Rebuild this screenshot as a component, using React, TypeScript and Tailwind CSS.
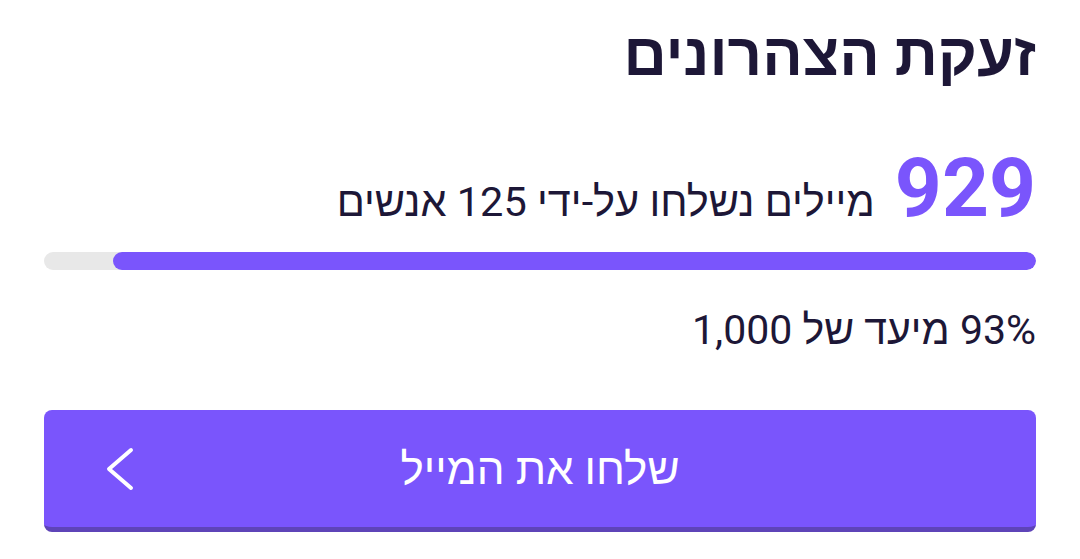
const sent = 929;
const goal = 1000;

export default function App() {
  const pct = Math.round((sent / goal) * 100);
  return (
    <div
      dir="rtl"
      className="min-h-[559px] w-[1080px] bg-white px-[44px] pt-[17px] text-[#1d1737]"
      style={{ fontFamily: 'Roboto, "Noto Sans", sans-serif' }}
    >
      <h1 className="text-[60px] font-bold leading-[76px]">זעקת הצהרונים</h1>

      <div className="mt-[55px] flex items-baseline gap-[20px]">
        <span className="text-[82px] font-bold leading-[80px] text-[#7a55fc]">
          {sent}
        </span>
        <span className="text-[41.5px] leading-[44px]">
          מיילים נשלחו על-ידי 125 אנשים
        </span>
      </div>

      <div className="mt-[24px] h-[18px] w-full overflow-hidden rounded-full bg-[#e8e8e8]">
        <div
          className="h-full rounded-full bg-[#7a55fc]"
          style={{ width: `${pct}%` }}
        />
      </div>

      <p className="mt-[36px] text-[41px] leading-[48px]">
        {pct}% מיעד של 1,000
      </p>

      <button className="mt-[56px] grid h-[122px] w-full grid-cols-[1fr_auto_1fr] items-center rounded-[8px] border-b-[5px] border-[#5e44b8] bg-[#7a55fc] px-[62px] text-white">
        <span />
        <span className="text-[44px] leading-[48px]">שלחו את המייל</span>
        <span className="flex justify-end">
          <svg width="28" height="44" viewBox="0 0 28 44" fill="none">
            <polyline
              points="25,3 3,22 25,41"
              stroke="currentColor"
              strokeWidth="4"
              strokeLinecap="round"
              strokeLinejoin="round"
            />
          </svg>
        </span>
      </button>
    </div>
  );
}
